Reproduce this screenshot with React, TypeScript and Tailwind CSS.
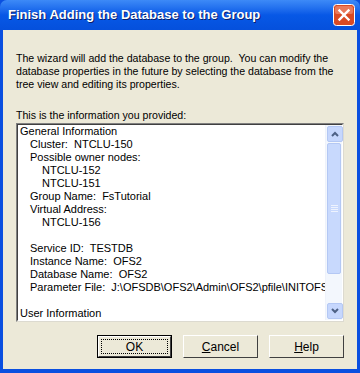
const lines: { text: string; indent: number }[] = [
  { text: "General Information", indent: 0 },
  { text: "Cluster:  NTCLU-150", indent: 1 },
  { text: "Possible owner nodes:", indent: 1 },
  { text: "NTCLU-152", indent: 2 },
  { text: "NTCLU-151", indent: 2 },
  { text: "Group Name:  FsTutorial", indent: 1 },
  { text: "Virtual Address:", indent: 1 },
  { text: "NTCLU-156", indent: 2 },
  { text: "", indent: 0 },
  { text: "Service ID:  TESTDB", indent: 1 },
  { text: "Instance Name:  OFS2", indent: 1 },
  { text: "Database Name:  OFS2", indent: 1 },
  { text: "Parameter File:  J:\\OFSDB\\OFS2\\Admin\\OFS2\\pfile\\INITOFS2.ORA", indent: 1 },
  { text: "", indent: 0 },
  { text: "User Information", indent: 0 },
];

function CloseIcon() {
  return (
    <svg width="22" height="22" viewBox="0 0 22 22" className="shrink-0">
      <rect x="0.5" y="0.5" width="21" height="21" rx="3" fill="#d94a24" stroke="#ffffff" />
      <rect x="2" y="2" width="18" height="8" rx="2" fill="#e9795a" />
      <path d="M6.5 6.5 L15.5 15.5 M15.5 6.5 L6.5 15.5" stroke="#ffffff" strokeWidth="2.4" strokeLinecap="square" />
    </svg>
  );
}

function ScrollArrow({ up }: { up?: boolean }) {
  return (
    <div className="h-[16px] w-[16px] rounded-[2px] border border-[#b4c8f4] bg-[#c6d7fd] flex items-center justify-center">
      <svg width="8" height="6" viewBox="0 0 8 6">
        <path d={up ? "M1 5 L4 2 L7 5" : "M1 1 L4 4 L7 1"} stroke="#4d6185" strokeWidth="2" fill="none" />
      </svg>
    </div>
  );
}

function Button({ children, primary }: { children: React.ReactNode; primary?: boolean }) {
  return (
    <div className={`h-[23px] w-[75px] ${primary ? "border border-black" : ""}`}>
      <div className="h-full w-full border-t border-l border-t-white border-l-white border-r border-b border-r-[#404040] border-b-[#404040] bg-[#ece9d8] flex items-center justify-center">
        <div className={`flex h-full w-full items-center justify-center ${primary ? "p-[2px]" : ""}`}>
          <div className={`flex h-full w-full items-center justify-center text-[12px] text-black ${primary ? "border border-dotted border-black" : ""}`}>
            {children}
          </div>
        </div>
      </div>
    </div>
  );
}

export default function App() {
  return (
    <div className="h-[373px] w-[360px] bg-[#0a4fe0] flex flex-col font-['Liberation_Sans',Arial,sans-serif] overflow-hidden">
      {/* title bar */}
      <div className="h-[30px] shrink-0 flex items-center justify-between pl-[8px] pr-[5px] rounded-t-[7px] bg-linear-to-b from-[#3d8af7] via-[#0758e6] to-[#0550dc]">
        <span className="text-[13px] font-bold text-white [text-shadow:1px_1px_0_#0a1f6a]">
          Finish Adding the Database to the Group
        </span>
        <CloseIcon />
      </div>

      {/* body */}
      <div className="mx-[3px] mb-[4px] flex-1 bg-[#ece9d8] flex flex-col px-[13px] pt-[22px]">
        <p className="whitespace-pre-wrap text-[10.6px] leading-[13px] text-black">
          The wizard will add the database to the group.  You can modify the database properties in the future by selecting the database from the tree view and editing its properties.
        </p>
        <p className="mt-[18px] text-[10.6px] leading-[13px] text-black">This is the information you provided:</p>

        <div className="mt-px h-[199px] border border-t-[#808080] border-l-[#808080] border-r-[#dcdad0] border-b-[#dcdad0]">
          <div className="h-full w-full border border-t-[#404040] border-l-[#404040] border-r-white border-b-white bg-white flex">
            <div className="flex-1 overflow-hidden pl-[2px]">
              {lines.map((l, i) => (
                <div
                  key={i}
                  className={`h-[13px] whitespace-pre text-[11px] leading-[13px] text-black ${
                    l.indent === 1 ? "pl-[10px]" : l.indent === 2 ? "pl-[22px]" : ""
                  }`}
                >
                  {l.text}
                </div>
              ))}
            </div>
            <div className="w-[17px] shrink-0 bg-[#f3f7fd] flex flex-col border-l border-[#eef2fb] p-px">
              <ScrollArrow up />
              <div className="flex-1 py-px">
                <div className="h-[131px] rounded-[2px] border border-[#b4c8f4] bg-[#c8d9fd] flex items-center justify-center">
                  <div className="flex flex-col gap-px">
                    <div className="h-px w-[7px] bg-[#eef3fe]" />
                    <div className="h-px w-[7px] bg-[#eef3fe]" />
                    <div className="h-px w-[7px] bg-[#eef3fe]" />
                    <div className="h-px w-[7px] bg-[#eef3fe]" />
                  </div>
                </div>
              </div>
              <ScrollArrow />
            </div>
          </div>
        </div>

        <div className="mt-[13px] flex justify-end gap-[11px]">
          <Button primary>OK</Button>
          <Button>
            <span className="underline underline-offset-1">C</span>ancel
          </Button>
          <Button>
            <span className="underline underline-offset-1">H</span>elp
          </Button>
        </div>
      </div>
    </div>
  );
}
